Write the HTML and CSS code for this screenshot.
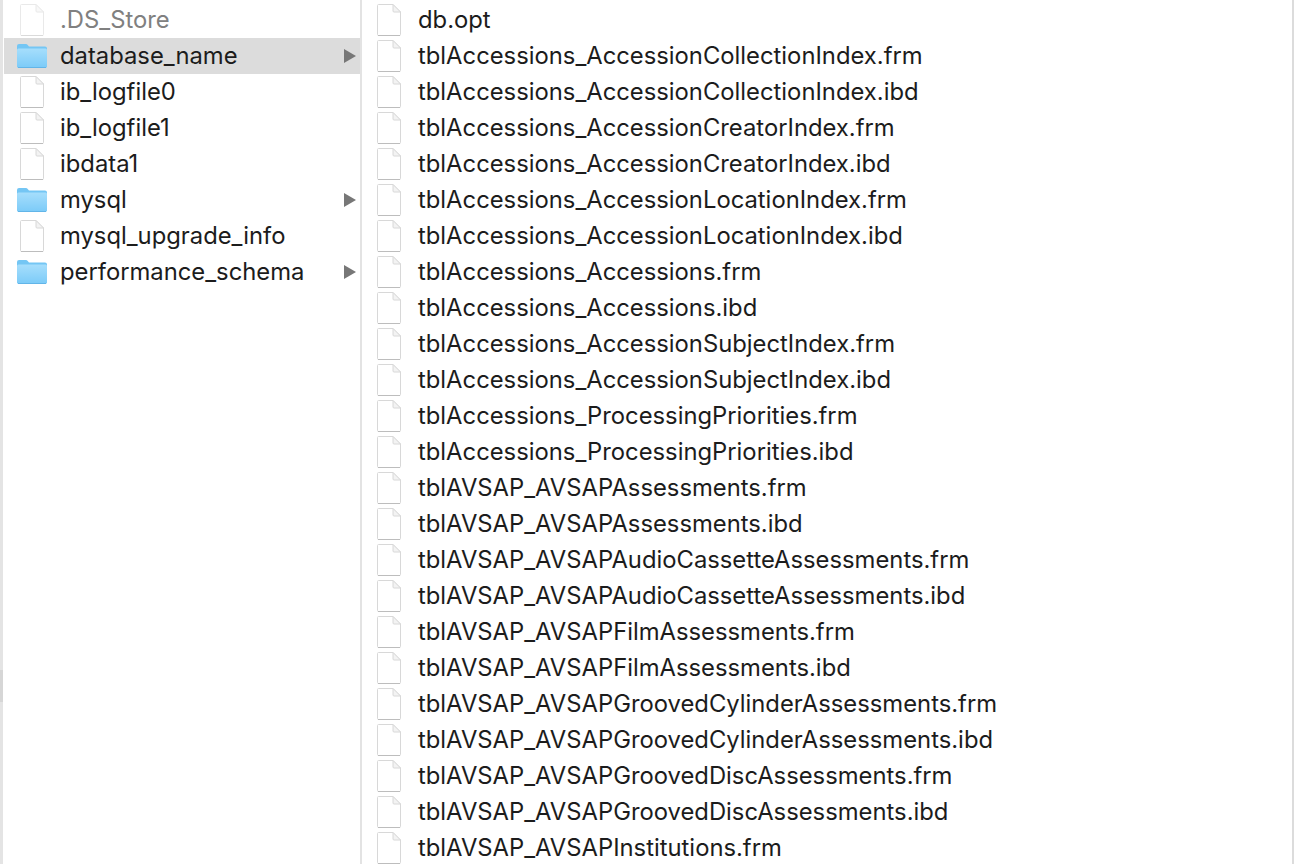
FILE: index.html
```html
<!DOCTYPE html>
<html lang="en">
<head>
<meta charset="utf-8">
<title>Finder</title>
<link rel="stylesheet" href="styles.css">
</head>
<body>
<svg class="defs" width="0" height="0" aria-hidden="true">
  <defs>
    <linearGradient id="folder-face" x1="0" y1="0" x2="0" y2="1">
      <stop offset="0" stop-color="#a6defc"/>
      <stop offset="1" stop-color="#7ccbf8"/>
    </linearGradient>
  </defs>
  <symbol id="doc" viewBox="0 0 24 32">
    <path d="M.5 1.500a1 1 0 0 1 1-1H16L23.500 8v22.500a1 1 0 0 1-1 1h-21a1 1 0 0 1-1-1z" fill="#fff" stroke="#d8d8d8"/>
    <path d="M1 31.500h22" stroke="#bdbdbd" fill="none"/>
    <path d="M16 .5V7a1 1 0 0 0 1 1h6.500z" fill="#f3f3f3" stroke="#d8d8d8"/>
  </symbol>
  <symbol id="folder" viewBox="0 0 30 25">
    <path d="M0 3a2 2 0 0 1 2-2h7a2 2 0 0 1 1.500.7L12 3.500h16a2 2 0 0 1 2 2V23a1.500 1.500 0 0 1-1.500 1.500h-27A1.500 1.500 0 0 1 0 23z" fill="#74c6f4"/>
    <path d="M0 7a1.500 1.500 0 0 1 1.500-1.500h27A1.500 1.500 0 0 1 30 7v16a1.500 1.500 0 0 1-1.500 1.500h-27A1.500 1.500 0 0 1 0 23z" fill="url(#folder-face)"/>
    <path d="M1 24.500h28" stroke="#62b5e8" fill="none"/>
  </symbol>
</svg>
<main class="finder">
  <i class="grip"></i>
  <section class="column sidebar">
    <div class="row muted"><svg class="ico doc faded"><use href="#doc"/></svg><span class="name">.DS_Store</span></div>
    <div class="row selected"><svg class="ico folder"><use href="#folder"/></svg><span class="name">database_name</span><i class="arrow"></i></div>
    <div class="row"><svg class="ico doc"><use href="#doc"/></svg><span class="name">ib_logfile0</span></div>
    <div class="row"><svg class="ico doc"><use href="#doc"/></svg><span class="name">ib_logfile1</span></div>
    <div class="row"><svg class="ico doc"><use href="#doc"/></svg><span class="name">ibdata1</span></div>
    <div class="row"><svg class="ico folder"><use href="#folder"/></svg><span class="name">mysql</span><i class="arrow"></i></div>
    <div class="row"><svg class="ico doc"><use href="#doc"/></svg><span class="name">mysql_upgrade_info</span></div>
    <div class="row"><svg class="ico folder"><use href="#folder"/></svg><span class="name">performance_schema</span><i class="arrow"></i></div>
  </section>
  <section class="column files">
    <div class="row"><svg class="ico doc"><use href="#doc"/></svg><span class="name">db.opt</span></div>
    <div class="row"><svg class="ico doc"><use href="#doc"/></svg><span class="name">tblAccessions_AccessionCollectionIndex.frm</span></div>
    <div class="row"><svg class="ico doc"><use href="#doc"/></svg><span class="name">tblAccessions_AccessionCollectionIndex.ibd</span></div>
    <div class="row"><svg class="ico doc"><use href="#doc"/></svg><span class="name">tblAccessions_AccessionCreatorIndex.frm</span></div>
    <div class="row"><svg class="ico doc"><use href="#doc"/></svg><span class="name">tblAccessions_AccessionCreatorIndex.ibd</span></div>
    <div class="row"><svg class="ico doc"><use href="#doc"/></svg><span class="name">tblAccessions_AccessionLocationIndex.frm</span></div>
    <div class="row"><svg class="ico doc"><use href="#doc"/></svg><span class="name">tblAccessions_AccessionLocationIndex.ibd</span></div>
    <div class="row"><svg class="ico doc"><use href="#doc"/></svg><span class="name">tblAccessions_Accessions.frm</span></div>
    <div class="row"><svg class="ico doc"><use href="#doc"/></svg><span class="name">tblAccessions_Accessions.ibd</span></div>
    <div class="row"><svg class="ico doc"><use href="#doc"/></svg><span class="name">tblAccessions_AccessionSubjectIndex.frm</span></div>
    <div class="row"><svg class="ico doc"><use href="#doc"/></svg><span class="name">tblAccessions_AccessionSubjectIndex.ibd</span></div>
    <div class="row"><svg class="ico doc"><use href="#doc"/></svg><span class="name">tblAccessions_ProcessingPriorities.frm</span></div>
    <div class="row"><svg class="ico doc"><use href="#doc"/></svg><span class="name">tblAccessions_ProcessingPriorities.ibd</span></div>
    <div class="row"><svg class="ico doc"><use href="#doc"/></svg><span class="name">tblAVSAP_AVSAPAssessments.frm</span></div>
    <div class="row"><svg class="ico doc"><use href="#doc"/></svg><span class="name">tblAVSAP_AVSAPAssessments.ibd</span></div>
    <div class="row"><svg class="ico doc"><use href="#doc"/></svg><span class="name">tblAVSAP_AVSAPAudioCassetteAssessments.frm</span></div>
    <div class="row"><svg class="ico doc"><use href="#doc"/></svg><span class="name">tblAVSAP_AVSAPAudioCassetteAssessments.ibd</span></div>
    <div class="row"><svg class="ico doc"><use href="#doc"/></svg><span class="name">tblAVSAP_AVSAPFilmAssessments.frm</span></div>
    <div class="row"><svg class="ico doc"><use href="#doc"/></svg><span class="name">tblAVSAP_AVSAPFilmAssessments.ibd</span></div>
    <div class="row"><svg class="ico doc"><use href="#doc"/></svg><span class="name">tblAVSAP_AVSAPGroovedCylinderAssessments.frm</span></div>
    <div class="row"><svg class="ico doc"><use href="#doc"/></svg><span class="name">tblAVSAP_AVSAPGroovedCylinderAssessments.ibd</span></div>
    <div class="row"><svg class="ico doc"><use href="#doc"/></svg><span class="name">tblAVSAP_AVSAPGroovedDiscAssessments.frm</span></div>
    <div class="row"><svg class="ico doc"><use href="#doc"/></svg><span class="name">tblAVSAP_AVSAPGroovedDiscAssessments.ibd</span></div>
    <div class="row"><svg class="ico doc"><use href="#doc"/></svg><span class="name">tblAVSAP_AVSAPInstitutions.frm</span></div>
  </section>
</main>
</body>
</html>
```
FILE: styles.css
```css
html, body {
  margin: 0;
  height: 100%;
  background: #fff;
  overflow: hidden;
}
.defs { display: block; height: 0; }
.finder {
  position: relative;
  display: flex;
  width: 1294px;
  height: 864px;
  box-sizing: border-box;
  border-left: 3px solid #e4e4e4;
  border-right: 2px solid #dcdcdc;
  font-family: Inter, "Liberation Sans", sans-serif;
  font-size: 23.8px;
  color: #1c1c1c;
}
.grip {
  position: absolute;
  left: -3px;
  top: 670px;
  width: 3px;
  height: 32px;
  background: #d6d6d6;
}
.column {
  padding-top: 2px;
  box-sizing: border-box;
  overflow: hidden;
}
.sidebar {
  width: 359px;
  flex: none;
  padding-left: 1px;
  border-right: 2px solid #e3e3e3;
}
.files { flex: 1; }
.row {
  display: flex;
  align-items: center;
  height: 36px;
  padding-left: 13px;
  white-space: nowrap;
}
.files .row { padding-left: 15px; }
.ico { flex: none; margin-bottom: 1px; }
.doc { width: 24px; height: 32px; margin-right: 16px; }
.folder { width: 30px; height: 25px; margin-right: 13px; }
.files .doc { margin-right: 17px; }
.sidebar .doc { margin-left: 3px; }
.faded { opacity: .55; }
.muted { color: #808080; }
.selected { background: #dcdcdc; }
.name { flex: 1; padding-bottom: 2px; }
.arrow {
  flex: none;
  width: 0;
  height: 0;
  margin-right: 4px;
  border-left: 12px solid #777;
  border-top: 7px solid transparent;
  border-bottom: 7px solid transparent;
}
```
